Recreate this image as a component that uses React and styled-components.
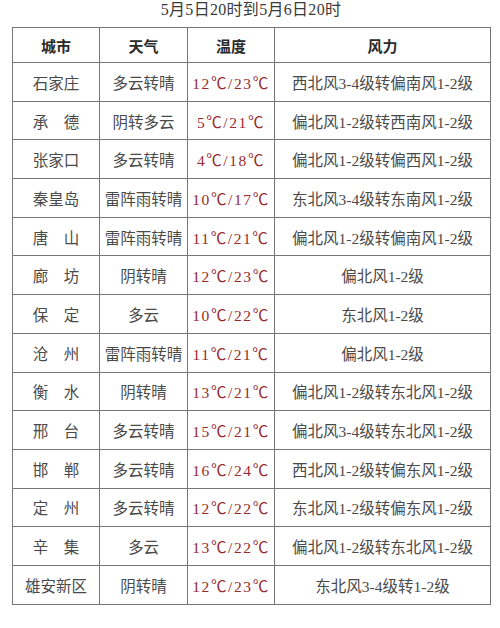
import React from 'react';
import styled, { createGlobalStyle } from 'styled-components';

const GlobalStyle = createGlobalStyle`
  html, body {
    margin: 0;
    padding: 0;
    background: #ffffff;
  }
  body {
    font-family: "Liberation Serif", "Noto Sans CJK SC", serif;
  }
`;

const Page = styled.div`
  width: 500px;
  height: 628px;
  background: #fff;
  display: flex;
  flex-direction: column;
  align-items: flex-start;
  overflow: hidden;
`;

const Title = styled.div`
  width: 500px;
  height: 27px;
  display: flex;
  justify-content: center;
  align-items: flex-start;
  font-size: 16px;
  line-height: 20px;
  color: #3a3a3a;
  letter-spacing: 0.3px;
  padding-left: 2px;
  box-sizing: border-box;
`;

const Table = styled.table`
  margin-left: 12px;
  width: 478px;
  border-collapse: collapse;
  table-layout: fixed;
  border: 1.5px solid #6a6a6a;
`;

const Col = styled.col`
  width: ${p => p.w}px;
`;

const HeadCell = styled.th`
  height: 34px;
  padding: 0;
  border: 1px solid #777;
  font-weight: 600;
  font-size: 15px;
  color: #2a2a2a;
  text-align: center;
  vertical-align: middle;
`;

const Cell = styled.td`
  height: 37.7px;
  padding: 0;
  border: 1px solid #777;
  font-size: 15.5px;
  color: ${p => (p.$temp ? '#962a2e' : '#4a4a4a')};
  text-align: center;
  vertical-align: middle;
  white-space: nowrap;
  letter-spacing: ${p => (p.$temp ? '1.6px' : '0')};
`;

const rows = [
  ['石家庄', '多云转晴', '12℃/23℃', '西北风3-4级转偏南风1-2级'],
  ['承　德', '阴转多云', '5℃/21℃', '偏北风1-2级转西南风1-2级'],
  ['张家口', '多云转晴', '4℃/18℃', '偏北风1-2级转偏西风1-2级'],
  ['秦皇岛', '雷阵雨转晴', '10℃/17℃', '东北风3-4级转东南风1-2级'],
  ['唐　山', '雷阵雨转晴', '11℃/21℃', '偏北风1-2级转偏南风1-2级'],
  ['廊　坊', '阴转晴', '12℃/23℃', '偏北风1-2级'],
  ['保　定', '多云', '10℃/22℃', '东北风1-2级'],
  ['沧　州', '雷阵雨转晴', '11℃/21℃', '偏北风1-2级'],
  ['衡　水', '阴转晴', '13℃/21℃', '偏北风1-2级转东北风1-2级'],
  ['邢　台', '多云转晴', '15℃/21℃', '偏北风3-4级转东北风1-2级'],
  ['邯　郸', '多云转晴', '16℃/24℃', '西北风1-2级转偏东风1-2级'],
  ['定　州', '多云转晴', '12℃/22℃', '东北风1-2级转偏东风1-2级'],
  ['辛　集', '多云', '13℃/22℃', '偏北风1-2级转东北风1-2级'],
  ['雄安新区', '阴转晴', '12℃/23℃', '东北风3-4级转1-2级'],
];

export default function App() {
  return (
    <Page>
      <GlobalStyle />
      <Title>5月5日20时到5月6日20时</Title>
      <Table>
        <colgroup>
          <Col w={87} />
          <Col w={88} />
          <Col w={87} />
          <Col w={216} />
        </colgroup>
        <thead>
          <tr>
            <HeadCell>城市</HeadCell>
            <HeadCell>天气</HeadCell>
            <HeadCell>温度</HeadCell>
            <HeadCell>风力</HeadCell>
          </tr>
        </thead>
        <tbody>
          {rows.map(([city, weather, temp, wind]) => (
            <tr key={city}>
              <Cell>{city}</Cell>
              <Cell>{weather}</Cell>
              <Cell $temp>{temp}</Cell>
              <Cell>{wind}</Cell>
            </tr>
          ))}
        </tbody>
      </Table>
    </Page>
  );
}
